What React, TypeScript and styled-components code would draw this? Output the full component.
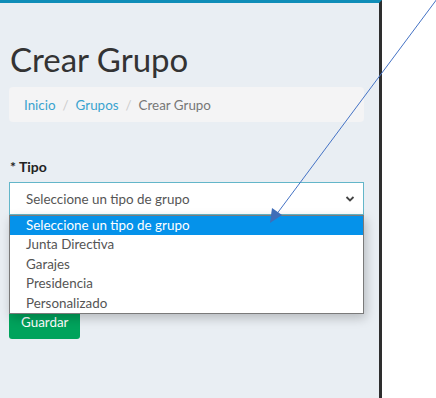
import React from 'react';
import styled, { createGlobalStyle } from 'styled-components';

const GlobalStyle = createGlobalStyle`
  html, body {
    margin: 0;
    padding: 0;
    background: #fff;
    font-family: Lato, 'Liberation Sans', sans-serif;
  }
`;

const Page = styled.div`
  position: relative;
  display: flex;
  height: 398px;
  overflow: hidden;
`;

const Content = styled.main`
  width: 382px;
  box-sizing: border-box;
  background: #e9eef3;
  border-top: 3px solid #0f8db8;
  border-right: 3px solid #2e2e2e;
  padding: 0 15px 0 9px;
`;

const Blank = styled.div`
  flex: 1;
  background: #fff;
`;

const Title = styled.h1`
  margin: 36px 0 0 1px;
  font-size: 33px;
  font-weight: 400;
  line-height: 40px;
  color: #333;
`;

const Breadcrumb = styled.ol`
  display: flex;
  align-items: center;
  list-style: none;
  margin: 8px 0 0;
  padding: 0 15px;
  height: 35px;
  background: #f4f4f5;
  border-radius: 4px;
  font-size: 13.4px;
`;

const Crumb = styled.li<{ $active?: boolean }>`
  color: ${(p) => (p.$active ? '#777' : '#3aa3cf')};

  &:not(:first-child)::before {
    content: '/';
    color: #ccc;
    padding: 0 7px;
  }
`;

const Field = styled.div`
  margin-top: 36px;
  position: relative;
`;

const Label = styled.label`
  display: block;
  font-size: 14px;
  font-weight: 700;
  color: #222;
  margin: 0 0 7px 1px;
`;

const SelectBox = styled.div`
  position: relative;
  display: flex;
  align-items: center;
  justify-content: space-between;
  height: 33px;
  box-sizing: border-box;
  border: 1px solid #63b6c9;
  background: #fff;
  padding: 0 8px 0 16px;
  font-size: 13.4px;
  color: #555;
`;

const Options = styled.ul`
  position: absolute;
  left: -1px;
  right: -1px;
  top: 100%;
  margin: 1px 0 0;
  padding: 0;
  list-style: none;
  background: #fff;
  border: 1px solid #7a7a7a;
  box-shadow: 2px 4px 10px rgba(0, 0, 0, 0.22);
  z-index: 5;
`;

const Option = styled.li<{ $selected?: boolean }>`
  height: 19.4px;
  line-height: 19.4px;
  padding-left: 16px;
  font-size: 13.4px;
  color: ${(p) => (p.$selected ? '#fff' : '#555')};
  background: ${(p) => (p.$selected ? '#0592ea' : 'transparent')};
`;

const Button = styled.button`
  margin-top: 90px;
  height: 34px;
  padding: 0 12px;
  border: 0;
  border-radius: 3px;
  background: #00a35c;
  color: #fff;
  font-family: inherit;
  font-size: 13.4px;
`;

const Arrow = styled.svg`
  position: absolute;
  left: 0;
  top: 0;
  pointer-events: none;
  z-index: 10;
`;

const options = [
  'Seleccione un tipo de grupo',
  'Junta Directiva',
  'Garajes',
  'Presidencia',
  'Personalizado',
];

export default function App() {
  return (
    <>
      <GlobalStyle />
      <Page>
        <Content>
          <Title>Crear Grupo</Title>
          <Breadcrumb>
            <Crumb>Inicio</Crumb>
            <Crumb>Grupos</Crumb>
            <Crumb $active>Crear Grupo</Crumb>
          </Breadcrumb>
          <Field>
            <Label>* Tipo</Label>
            <SelectBox>
              <span>Seleccione un tipo de grupo</span>
              <svg width="10" height="8" viewBox="0 0 10 8">
                <polyline points="1.5,2 5,5.5 8.5,2" fill="none" stroke="#444" strokeWidth="1.8" />
              </svg>
              <Options>
                {options.map((o, i) => (
                  <Option key={o} $selected={i === 0}>
                    {o}
                  </Option>
                ))}
              </Options>
            </SelectBox>
          </Field>
          <Button>Guardar</Button>
        </Content>
        <Blank />
        <Arrow width="436" height="398" viewBox="0 0 436 398">
          <line x1="437" y1="-1" x2="276" y2="215" stroke="#4472c4" strokeWidth="1" />
          <polygon points="270,223 272,208 282,215" fill="#3f6db8" />
        </Arrow>
      </Page>
    </>
  );
}
